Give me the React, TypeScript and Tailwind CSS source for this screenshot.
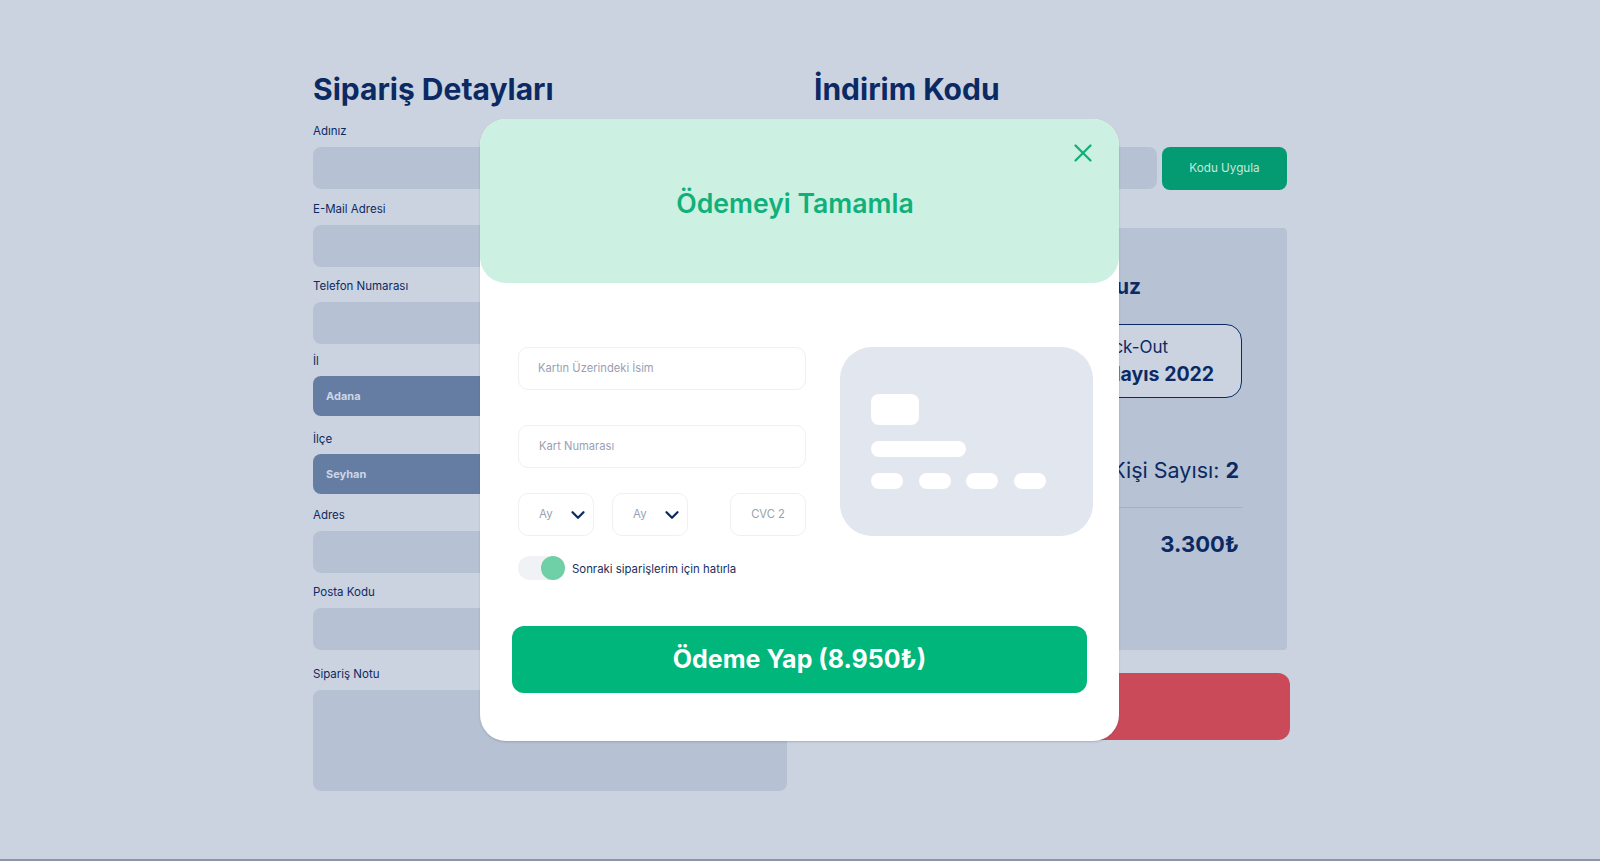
import { ChevronDown, X } from "lucide-react";

const font = "font-['Inter','Liberation_Sans',sans-serif]";

function Field({ label, tall, value, className = "" }: { label: string; tall?: boolean; value?: string; className?: string }) {
  return (
    <div className={className}>
      <div className="h-[16px] text-[11.5px] leading-[16px] text-[#0b2a63]">{label}</div>
      {value ? (
        <div className="mt-[7px] flex h-[40px] items-center rounded-[8px] bg-[#667da3] pl-[13px] text-[11px] font-bold text-[#ccd6e6]">
          {value}
        </div>
      ) : (
        <div className={`mt-[8px] rounded-[8px] bg-[#b6c2d3] ${tall ? "h-[101px]" : "h-[42px]"}`} />
      )}
    </div>
  );
}

function CardInput({ text, className }: { text: string; className: string }) {
  return (
    <div className={`flex h-[43px] items-center rounded-[10px] border border-[#eef0f4] text-[11.2px] text-[#9a9fb2] ${className}`}>
      {text}
    </div>
  );
}

function MonthSelect() {
  return (
    <div className="flex h-[43px] w-[76px] items-center justify-between rounded-[10px] border border-[#eef0f4] pl-[20px] pr-[4px] text-[11.5px] text-[#9a9fb2]">
      Ay
      <ChevronDown size={22} strokeWidth={2.5} className="text-[#0b2a63]" />
    </div>
  );
}

export default function App() {
  return (
    <div className={`relative h-[861px] w-[1600px] overflow-hidden border-b-[2px] border-[#8d94a8] bg-[#ccd3e0] ${font}`}>
      <div className="flex pl-[313px] pt-[70px]">
        {/* sol kolon */}
        <div className="w-[474px]">
          <h1 className="h-[38px] text-[30px] font-bold leading-[38px] text-[#0b2a63]">Sipariş Detayları</h1>
          <div className="mt-[15px] flex flex-col">
            <Field label="Adınız" />
            <Field label="E-Mail Adresi" className="mt-[12px]" />
            <Field label="Telefon Numarası" className="mt-[11px]" />
            <Field label="İl" value="Adana" className="mt-[9px]" />
            <Field label="İlçe" value="Seyhan" className="mt-[15px]" />
            <Field label="Adres" className="mt-[13px]" />
            <Field label="Posta Kodu" className="mt-[11px]" />
            <Field label="Sipariş Notu" tall className="mt-[16px]" />
          </div>
        </div>

        {/* sag kolon */}
        <div className="ml-[27px] w-[476px]">
          <h1 className="h-[38px] text-[30px] font-bold leading-[38px] text-[#0b2a63]">İndirim Kodu</h1>
          <div className="mt-[39px] flex w-[473px] gap-[5px]">
            <div className="h-[42px] flex-1 rounded-[8px] bg-[#b6c2d3]" />
            <button className="flex h-[43px] w-[125px] items-center justify-center rounded-[8px] bg-[#049b72] text-[11.7px] text-[#c5e9dc]">
              Kodu Uygula
            </button>
          </div>
          <div className="mt-[38px] flex h-[422px] w-[473px] flex-col rounded-[4px] bg-[#b7c3d4] pr-[45px] pt-[44px] text-[#0b2a63]">
            <div className="pr-[101px] text-right text-[21px] font-bold leading-[30px]">Rezervasyonunuz</div>
            <div className="ml-auto mt-[22px] flex h-[74px] w-[240px] flex-col justify-center rounded-[16px] border border-[#0b2a63] bg-[#ccd3e0] pl-[78px]">
              <div className="text-[17px] leading-[26px]">Check-Out</div>
              <div className="whitespace-nowrap text-[19.5px] font-bold leading-[28px]">11 Mayıs 2022</div>
            </div>
            <div className="mt-[57px] pr-[3px] text-right text-[21.5px] leading-[30px]">
              Kişi Sayısı: <b>2</b>
            </div>
            <div className="mt-[22px] h-px bg-[#a3b0c4]" />
            <div className="mt-[21px] pr-[3px] text-right text-[22px] font-bold leading-[30px]">3.300₺</div>
          </div>
          <div className="mt-[23px] h-[67px] rounded-[12px] bg-[#cb4a59]" />
        </div>
      </div>

      {/* odeme modali */}
      <div className="absolute left-[480px] top-[119px] h-[622px] w-[639px] rounded-[26px] bg-white shadow-[0_1px_2px_rgba(60,70,100,0.25)]">
        <div className="relative flex h-[164px] items-center justify-center rounded-[26px] bg-[#ccf0e2] pr-[9px] pt-[5px]">
          <h2 className="text-[26.6px] font-semibold text-[#10b07a]">Ödemeyi Tamamla</h2>
          <X size={30} strokeWidth={1.8} className="absolute right-[21px] top-[19px] text-[#10b07a]" />
        </div>

        <div className="mt-[64px] flex pl-[38px]">
          <div className="w-[288px]">
            <CardInput text="Kartın Üzerindeki İsim" className="pl-[19px]" />
            <CardInput text="Kart Numarası" className="mt-[35px] pl-[20px]" />
            <div className="mt-[25px] flex">
              <MonthSelect />
              <div className="ml-[18px]">
                <MonthSelect />
              </div>
              <CardInput text="CVC 2" className="ml-auto w-[76px] justify-center" />
            </div>
            <div className="mt-[20px] flex items-center">
              <div className="relative h-[24px] w-[47px] rounded-full bg-[#f0f2f5]">
                <div className="absolute right-0 top-0 h-[24px] w-[24px] rounded-full bg-[#6fcfa7]" />
              </div>
              <span className="ml-[7px] mt-[3px] text-[11.4px] text-[#1c2f5c]">Sonraki siparişlerim için hatırla</span>
            </div>
          </div>

          <div className="ml-[34px] flex h-[189px] w-[253px] flex-col rounded-[32px] bg-[#e2e6ee] pl-[31px] pt-[47px]">
            <div className="h-[31px] w-[48px] rounded-[8px] bg-white" />
            <div className="mt-[16px] h-[16px] w-[95px] rounded-full bg-white" />
            <div className="mt-[16px] flex gap-[15.5px]">
              <div className="h-[16px] w-[32px] rounded-full bg-white" />
              <div className="h-[16px] w-[32px] rounded-full bg-white" />
              <div className="h-[16px] w-[32px] rounded-full bg-white" />
              <div className="h-[16px] w-[32px] rounded-full bg-white" />
            </div>
          </div>
        </div>

        <button className="ml-[32px] mt-[46px] flex h-[67px] w-[575px] items-center justify-center rounded-[12px] bg-[#00b67a] text-[25px] font-bold text-white">
          Ödeme Yap (8.950₺)
        </button>
      </div>
    </div>
  );
}
